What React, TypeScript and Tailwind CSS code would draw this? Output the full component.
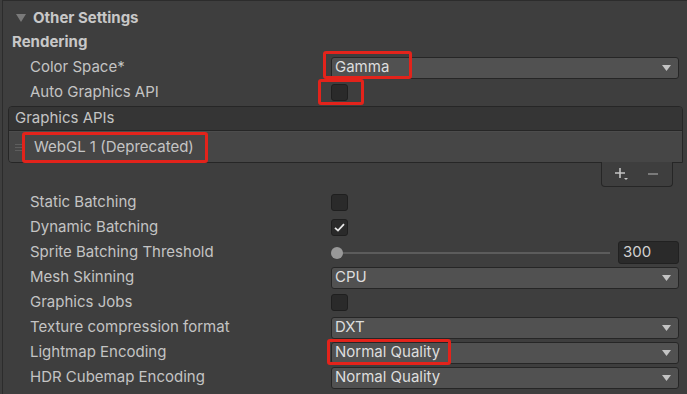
import React from 'react';

const font = { fontFamily: 'Inter, "Noto Sans", sans-serif' };

function Dropdown({ value }: { value: string }) {
  return (
    <div className="flex h-[22px] w-full items-center justify-between rounded-[3px] border border-[#262626] bg-[#515151] pl-[3px] pr-[6px] text-[15px] text-[#dedede]">
      <span>{value}</span>
      <svg width="9" height="6" viewBox="0 0 9 6" className="mr-[1px]">
        <path d="M0 0 H9 L4.5 6 Z" fill="#c4c4c4" />
      </svg>
    </div>
  );
}

function Checkbox({ checked = false }: { checked?: boolean }) {
  return (
    <div className="flex h-[17px] w-[17px] items-center justify-center rounded-[3px] border border-[#1f1f1f] bg-[#2a2a2a]">
      {checked && (
        <svg width="11" height="9" viewBox="0 0 11 9">
          <path d="M1 4.8 L4 7.6 L10 1.2" stroke="#e8e8e8" strokeWidth="1.8" fill="none" />
        </svg>
      )}
    </div>
  );
}

function Row({ label, children }: { label: string; children?: React.ReactNode }) {
  return (
    <div className="flex h-[25px] items-center pl-[27px] pr-[8px]">
      <div className="w-[301px] shrink-0 text-[15px] text-[#c4c4c4]">{label}</div>
      <div className="flex flex-1 items-center">{children}</div>
    </div>
  );
}

function Highlight({ className }: { className: string }) {
  return <div className={`pointer-events-none absolute rounded-[3px] border-[3px] border-[#e3231b] ${className}`} />;
}

export default function App(): React.ReactNode {
  return (
    <div className="relative h-[394px] w-[687px] overflow-hidden bg-[#3e3e3e]" style={font}>
      <div className="ml-[2px] h-full border-l border-t border-[#2c2c2c]">
        <div className="flex h-[29px] items-center pt-[5px] pl-[13px] text-[15px] font-bold text-[#c8c8c8]">
          <svg width="10" height="8" viewBox="0 0 10 8" className="mr-[7px]">
            <path d="M0 0 H10 L5 8 Z" fill="#7a7a7a" />
          </svg>
          Other Settings
        </div>
        <div className="flex h-[25px] items-center pl-[9px] text-[15px] font-bold text-[#c8c8c8]">Rendering</div>
        <Row label="Color Space*">
          <Dropdown value="Gamma" />
        </Row>
        <Row label="Auto Graphics API">
          <Checkbox />
        </Row>

        <div className="ml-[5px] mr-[4px] mt-[1px]">
          <div className="overflow-hidden rounded-t-[4px] rounded-bl-[4px] border border-[#262626]">
            <div className="flex h-[24px] items-center border-b border-[#262626] bg-[#353535] pl-[6px] text-[15px] text-[#c4c4c4]">
              Graphics APIs
            </div>
            <div className="flex h-[31px] items-center border-t border-[#4c4c4c] bg-[#464646]">
              <div className="ml-[6px] flex w-[10px] flex-col gap-[2px]">
                <div className="h-[1px] bg-[#5e5e5e]" />
                <div className="h-[1px] bg-[#5e5e5e]" />
                <div className="h-[1px] bg-[#5e5e5e]" />
              </div>
              <span className="ml-[9px] text-[15px] text-[#c4c4c4]">WebGL 1 (Deprecated)</span>
            </div>
          </div>
          <div className="flex justify-end pr-[10px]">
            <div className="-mt-[1px] flex h-[25px] w-[72px] items-center rounded-b-[4px] border border-t-0 border-[#262626] bg-[#3e3e3e]">
              <svg width="18" height="14" viewBox="0 0 18 14" className="ml-[12px]">
                <path d="M6 1 V11 M1 6 H11" stroke="#c4c4c4" strokeWidth="1.6" />
                <path d="M10 11 H14 L12 13 Z" fill="#c4c4c4" />
              </svg>
              <div className="ml-[16px] h-[2px] w-[10px] bg-[#7a7a7a]" />
            </div>
          </div>
        </div>

        <div className="mt-[3px]">
          <Row label="Static Batching">
            <Checkbox />
          </Row>
          <Row label="Dynamic Batching">
            <Checkbox checked />
          </Row>
          <Row label="Sprite Batching Threshold">
            <div className="flex flex-1 items-center">
              <div className="relative flex h-[14px] flex-1 items-center">
                <div className="ml-[4px] h-[2px] flex-1 bg-[#5c5c5c]" />
                <div className="absolute left-0 top-[1px] h-[12px] w-[12px] rounded-full bg-[#999999]" />
              </div>
              <div className="ml-[8px] flex h-[23px] w-[61px] items-center rounded-[3px] border border-[#212121] bg-[#2a2a2a] pl-[4px] text-[15px] text-[#d2d2d2]">
                300
              </div>
            </div>
          </Row>
          <Row label="Mesh Skinning">
            <Dropdown value="CPU" />
          </Row>
          <Row label="Graphics Jobs">
            <Checkbox />
          </Row>
          <Row label="Texture compression format">
            <Dropdown value="DXT" />
          </Row>
          <Row label="Lightmap Encoding">
            <Dropdown value="Normal Quality" />
          </Row>
          <Row label="HDR Cubemap Encoding">
            <Dropdown value="Normal Quality" />
          </Row>
          <Row label="">
            <Checkbox />
          </Row>
        </div>
      </div>

      <Highlight className="left-[323px] top-[51px] h-[28px] w-[89px]" />
      <Highlight className="left-[318px] top-[79px] h-[26px] w-[46px]" />
      <Highlight className="left-[22px] top-[132px] h-[31px] w-[186px]" />
      <Highlight className="left-[327px] top-[339px] h-[26px] w-[124px]" />
    </div>
  );
}
